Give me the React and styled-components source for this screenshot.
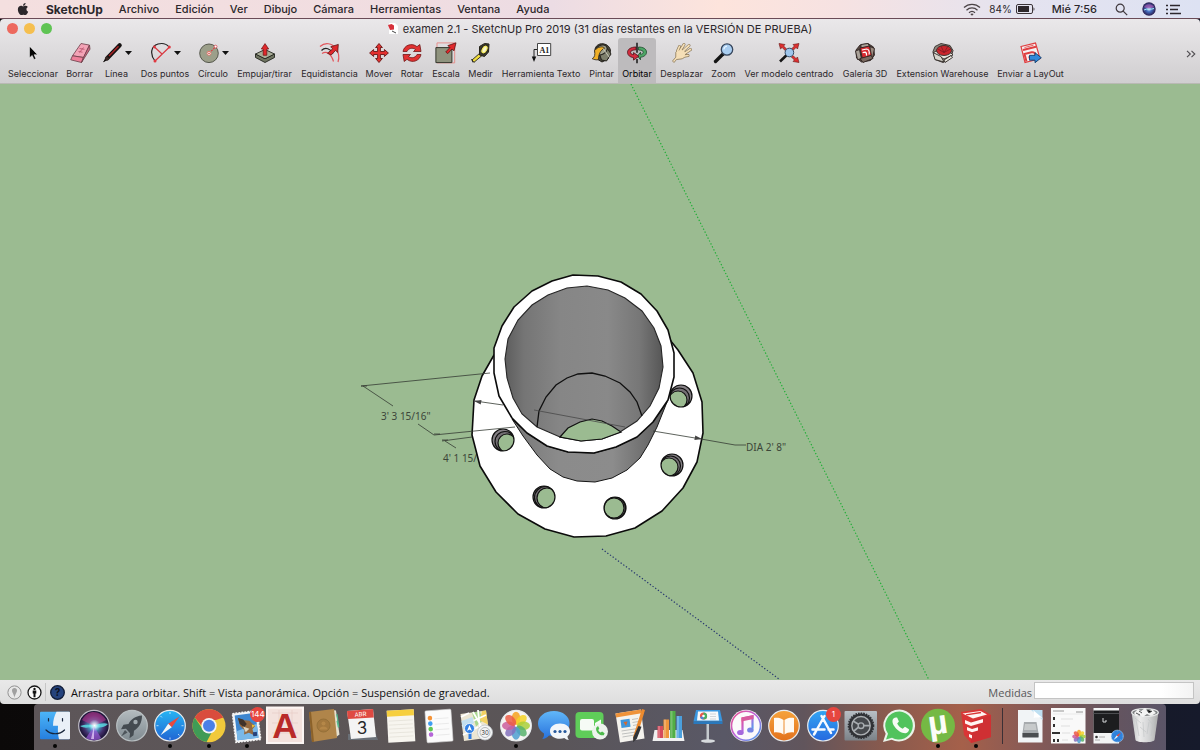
import React from 'react';
import styled, { createGlobalStyle } from 'styled-components';
import { FaApple, FaPhoneAlt } from 'react-icons/fa';

const theme = {
  fonts: {
    ui: 'Inter, "Liberation Sans", sans-serif',
    status: '"Open Sans", "Noto Sans", sans-serif',
    dimension: '"Noto Sans", "DejaVu Sans", sans-serif'
  },
  fontSizes: {
    label: '9px',
    status: '11px',
    menu: '11px',
    appMenu: '12px'
  },
  colors: {
    text: '#2b272b',
    ground: '#9bbb91',
    border: '#6a4b57'
  }
};

const GlobalStyle = createGlobalStyle`
  * {
    box-sizing: border-box;
  }

  body {
    margin: 0;
    background: #0d0b0d;
    font-family: ${theme.fonts.ui};
    color: ${theme.colors.text};
  }

  button {
    margin: 0;
    padding: 0;
    border: 0;
    background: none;
    font: inherit;
    color: inherit;
  }

  svg {
    display: block;
  }
`;

const Desktop = styled.div`
  display: flex;
  flex-direction: column;
  min-height: 100vh;
  background: linear-gradient(90deg, #0b0909, #171316 50%, #161a2b);
`;

const MenuBar = styled.header`
  display: flex;
  justify-content: space-between;
  align-items: center;
  height: 19px;
  padding: 0 19px 0 16px;
  border-bottom: 1px solid ${theme.colors.border};
  background: linear-gradient(90deg, #f4dfdf, #f0dde1 35%, #ecdce4 46%, #fde4dc 60%, #f6e2e2 70%, #e5e3ef 84%, #dde2f3);
  font-size: ${theme.fontSizes.menu};
  white-space: nowrap;
`;

const Menus = styled.nav`
  display: flex;
  align-items: center;
  gap: 16px;
`;

const MenuButton = styled.button`
  font-size: ${({ $bold }) => ($bold ? theme.fontSizes.appMenu : theme.fontSizes.menu)};
  font-weight: ${({ $bold }) => ($bold ? 700 : 500)};
`;

const MenuExtras = styled.div`
  display: flex;
  align-items: center;
`;

const ExtraButton = styled.button`
  margin-left: ${({ $space }) => $space}px;
  font-weight: 500;
`;

const Battery = styled.div`
  display: flex;
  align-items: center;
  gap: 4px;
  margin-left: 8px;
  font-size: 10px;
`;

const Window = styled.main`
  display: flex;
  flex: 1;
  flex-direction: column;
  overflow: hidden;
  border-radius: 4px;
`;

const WindowHead = styled.div`
  height: 65px;
  border-bottom: 1px solid #b9b9b4;
  background: linear-gradient(#eae8ea, #d0ced0);
`;

const TitleBar = styled.div`
  display: grid;
  grid-template-columns: 60px 1fr 60px;
  align-items: center;
  height: 19px;
  padding: 0 7px;
`;

const TrafficLights = styled.div`
  display: flex;
  gap: 6px;
`;

const TrafficLight = styled.button`
  width: 11px;
  height: 11px;
  border-radius: 50%;
  background: ${({ $color }) => $color};
`;

const Title = styled.h1`
  display: flex;
  justify-content: center;
  align-items: center;
  gap: 5px;
  margin: 0;
  font-size: ${theme.fontSizes.menu};
  font-weight: 400;
  white-space: nowrap;
`;

const Toolbar = styled.div`
  display: flex;
  height: 45px;
  padding: 0 4px;
`;

const Tool = styled.button`
  display: flex;
  flex: 0 0 ${({ $width }) => $width}px;
  flex-direction: column;
  align-items: center;
  gap: 4px;
  padding-top: 4px;
  border-radius: 3px 3px 0 0;
  background: ${({ $active }) => ($active ? '#bdbbbd' : 'none')};
  color: ${({ $active }) => ($active ? '#000' : 'inherit')};
  font-size: ${theme.fontSizes.label};
  line-height: 12px;
  white-space: nowrap;
`;

const ToolPicture = styled.span`
  display: flex;
  align-items: center;
  gap: 2px;
`;

const Overflow = styled.button`
  margin-left: auto;
  padding: 0 0 13px;
`;

const Viewport = styled.section`
  display: flex;
  flex: 1;
  min-height: 0;
  background: ${theme.colors.ground};

  svg {
    flex: 1;
    width: 100%;
  }
`;

const StatusBar = styled.footer`
  display: flex;
  align-items: center;
  height: 24px;
  padding: 0 6px 0 7px;
  background: linear-gradient(#e9e9e9, #dedede);
  font-family: ${theme.fonts.status};
  font-size: ${theme.fontSizes.status};
  white-space: nowrap;
`;

const StatusButton = styled.button`
  margin-right: ${({ $space }) => $space}px;
`;

const Divider = styled.span`
  width: 1px;
  height: 18px;
  margin-right: 4px;
  background: #c6c6c6;
`;

const StatusText = styled.p`
  margin: 0;
  color: #0f0f0f;
`;

const Measure = styled.label`
  display: flex;
  align-items: center;
  gap: 2px;
  margin-left: auto;
  color: #58585a;
`;

const MeasureInput = styled.input`
  width: 160px;
  height: 17px;
  margin-bottom: 4px;
  padding: 0 3px;
  border: 1px solid #c4c4c4;
  background: linear-gradient(90deg, #fff 80%, #f3f3f3);
  font: inherit;
`;

const DockArea = styled.div`
  padding: 0 34px;
`;

const Dock = styled.nav`
  display: flex;
  height: 46px;
  padding: 2px 2px 0;
  border-radius: 4px 4px 0 0;
  background: linear-gradient(90deg, #5d5659, #5b5556 35%, #5a5558 45%, #595866 61%, #61555c 68%, #885a4e 75%, #a5604a 82%, #875a56 88%, #65545e 95%, #5b5568);
`;

const DockItem = styled.button`
  position: relative;
  display: flex;
  flex: 1;
  flex-direction: column;
  align-items: center;

  svg {
    flex: 0 0 38px;
    overflow: visible;
  }
`;

const RunningDot = styled.span`
  width: 4px;
  height: 4px;
  border-radius: 50%;
  background: #050505;
`;

const Badge = styled.span`
  position: absolute;
  top: 1px;
  right: 1px;
  min-width: 15px;
  height: 15px;
  border-radius: 8px;
  background: #e6463f;
  color: #fff;
  font-size: 8px;
  line-height: 15px;
  text-align: center;
`;

const DockSeparator = styled.span`
  flex: 0 0 15px;
  height: 36px;
  margin-top: 2px;
  background: linear-gradient(#3b3036, #3b3036) center / 1px 100% no-repeat;
`;

const ToolIcon = ({ children }) => (
  <svg width="22" height="22" viewBox="0 0 22 22" aria-hidden="true">{children}</svg>
);

const FourArrows = 'M11 1.5l3.4 4h-2v4h4v-2l4 3.5-4 3.5v-2h-4v4h2l-3.4 4-3.4-4h2v-4h-4v2L1.6 11l4-3.5v2h4v-4h-2z';

const toolIcons = {
  select: <path d="M7.5 4.2v11.6l2.7-2.4 1.8 4.1 1.9-.8-1.8-4h3.5z" fill="#050505" stroke="#fff" strokeWidth=".5" />,
  eraser: (
    <g stroke="#6b3c48" strokeWidth=".8" strokeLinejoin="round">
      <path d="M12 1.500l8.500 1.600-6 12.400L3.500 13.800z" fill="#f3a3b6" />
      <path d="M3.500 13.800l11 1.700-2 5-10.800-2.700z" fill="#ee809a" />
      <path d="M14.500 15.500l6-12.400.5 4-8.500 13.400z" fill="#d06a84" />
      <path d="M10.500 10.500l4-5M10.500 6.500l5 .8M9.500 9.500l4 .7" stroke="#b64d68" fill="none" />
    </g>
  ),
  pencil: (
    <g>
      <path d="M6 16.500L18.700 3.300" stroke="#161212" strokeWidth="4.200" strokeLinecap="round" />
      <path d="M8 14L17.500 4.200" stroke="#a92324" strokeWidth="1.500" />
      <path d="M5.500 13.800l3 3-6.300 3.400z" fill="#3b2723" />
      <path d="M4.200 17l1.400 1.400L2 20.200z" fill="#111" />
    </g>
  ),
  arc: (
    <g fill="none">
      <path d="M5 19C-.5 12 1 4 8 2c5-1.3 9 .5 11 3" stroke="#202020" strokeWidth="1.200" />
      <path d="M5 19L19.500 5M4.500 5l7.500 7" stroke="#d93a42" strokeWidth="1.200" />
      <g fill="#e03840"><circle cx="5" cy="19" r="1.500" /><circle cx="19.300" cy="5" r="1.500" /><circle cx="4.500" cy="5" r="1.400" /></g>
    </g>
  ),
  circle: (
    <g>
      <circle cx="11" cy="11.300" r="9.300" fill="#9c9f8a" stroke="#4c4e43" strokeWidth=".9" />
      <path d="M11 11.300l6.500-6.500" stroke="#e03b40" strokeWidth="1.100" strokeDasharray="2 1" />
      <circle cx="11" cy="11.300" r="2" fill="#fff" stroke="#dd7768" />
      <circle cx="11" cy="11.300" r=".8" fill="#c22" />
      <circle cx="17.600" cy="4.600" r="1.400" fill="#fff" stroke="#dd3840" strokeWidth=".7" />
    </g>
  ),
  pushPull: (
    <g strokeLinejoin="round">
      <path d="M1.500 12v3.500L11 20.500l9.500-5V12L11 16.600z" fill="#6f7461" stroke="#23251e" strokeWidth=".9" />
      <path d="M1.500 12L11 7.500l9.500 4.500L11 16.800z" fill="#a9ad98" stroke="#23251e" strokeWidth=".9" />
      <path d="M9.200 13.300V7H7.300L11 1.600 14.700 7h-1.900v6.300z" fill="#df292c" stroke="#6b1212" strokeWidth=".7" />
    </g>
  ),
  offset: (
    <g fill="none" strokeWidth="1.200">
      <path d="M1 4.500c5-4.500 12-3.500 16 2 3 4.500 3.500 9 2 13.500" stroke="#e2565c" />
      <path d="M3 11.500c5-3 9.500 1 11.500 8" stroke="#e2565c" />
      <path d="M2.500 8.500c4-4 9-1.600 11.500 3" stroke="#222" />
      <path d="M8.500 11.200l5.200-4.400-2-2 7.600-2.400-.6 8-2.100-2-4.400 4.600z" fill="#df292c" stroke="#5e1515" strokeWidth=".8" />
    </g>
  ),
  move: <path d={FourArrows} fill="#e4302f" stroke="#681515" strokeWidth=".9" strokeLinejoin="round" />,
  rotate: (
    <g fill="#e23131" stroke="#711919" strokeWidth=".8" strokeLinejoin="round">
      <path d="M2 9.500C3 3.500 10.500.2 16 4.700l2.800-2.200L20 9.500h-7.500l2-2C11.500 5.200 7.500 6.300 6 9.500z" />
      <path d="M20 12.500C19 18.500 11.500 21.800 6 17.300l-2.800 2.200L2 12.500h7.500l-2 2c3 2.300 7 1.200 8.500-2z" />
    </g>
  ),
  scale: (
    <g>
      <path d="M2 .9h17.700v20H2z" fill="none" stroke="#e58f8c" />
      <path d="M.9 5.600h16v15h-16z" fill="#8f937e" stroke="#34372d" />
      <path d="M10.700 10l4.200-4.400-2-2L21 .8l-2 8-2-1.800-4.200 4.600z" fill="#e0292c" stroke="#621414" strokeWidth=".8" />
    </g>
  ),
  tape: (
    <g stroke="#25231a" strokeLinejoin="round">
      <path d="M2 18l8-7 2.400 2.200L4 20.300z" fill="#f0dc3c" strokeWidth=".9" />
      <path d="M9.500 4.500l5-3 4.500.5-.5 8-4 4.500-5-1.500z" fill="#3c3a31" />
      <ellipse cx="14.500" cy="7.500" rx="3.200" ry="4.700" transform="rotate(30 14.500 7.500)" fill="#f3e85b" />
      <ellipse cx="14.600" cy="7.400" rx="1.500" ry="3" transform="rotate(30 14.600 7.400)" fill="#f7f5cf" stroke="none" />
      <path d="M1.600 17l1.500 3.500" />
    </g>
  ),
  text: (
    <g>
      <path d="M7.500 1.500h13.200v12H7.500z" fill="#fff" stroke="#444" />
      <path d="M7 7.500H4V17" fill="none" stroke="#222" />
      <path d="M1.800 14.500h4.400L4 20z" fill="#111" />
      <text x="9.500" y="10.500" fontFamily="Liberation Serif, serif" fontSize="8" fontWeight="700" fill="#222">A1</text>
    </g>
  ),
  paint: (
    <g stroke="#25221d" strokeLinejoin="round">
      <path d="M4 8c0-4 4-6.700 8-6.200 4.400.5 7.500 3.600 7.500 7.700L17 17l-6 3-5-3z" fill="#48483b" />
      <path d="M8 10.500l8-4.500 4 6-4.500 7-5-1z" fill="#7e806c" />
      <ellipse cx="10" cy="8" rx="6.500" ry="4.600" transform="rotate(-28 10 8)" fill="#a2a48f" />
      <path d="M3.600 8.600c3.200-4 8-4.800 10-2.400-4.400 2.200-6 6.200-6.200 11.500-3.200.6-6.200-1-6.200-1 2.600-1.400 3-4 2.400-8.100z" fill="#efaf27" strokeWidth=".8" />
      <path d="M12 6.500l6.500 9" stroke="#c8c8b9" />
    </g>
  ),
  orbit: (
    <g strokeLinejoin="round">
      <path d="M12.500 5c4.500 0 8 1.800 8 5.100 0 3-2.500 4.700-6 5.200v2.500L11.500 14l3-3.800v2.200c1.800-.3 2.800-1 2.800-2.200 0-1.500-2-2.200-4.800-2.200z" fill="#4ea666" stroke="#1d4a2c" strokeWidth=".8" />
      <path d="M10 5C5 5 1.500 7.200 1.500 10.300c0 3 2.500 4.800 6 5.400v2.400l5.400-3.800-5.400-3.700v2.100c-2-.4-3-1.200-3-2.400C4.500 8.800 7 7.800 10 7.800z" fill="#d22c3e" stroke="#4d1119" strokeWidth=".8" />
      <path d="M11 .8v10M11 17v4.200" stroke="#171717" strokeWidth="1.500" />
    </g>
  ),
  pan: (
    <g strokeLinecap="round" strokeLinejoin="round">
      <path d="M6.500 9L8.500 4.500M9.500 8L13 2.500M12.500 8.500L18 3.500M13.500 11.500L19.500 7.500M8 15L17 13.500" stroke="#8a7757" strokeWidth="3" />
      <path d="M5 10c2-3 7-3.500 9-.5 1.500 3 0 7-4 7.500l-4.500.5L3 20.500 1.500 19l3-3.500z" fill="#f5dfb7" stroke="#8a7757" strokeWidth=".8" />
      <path d="M6.500 9L8.500 4.500M9.500 8L13 2.500M12.500 8.500L18 3.500M13.500 11.500L19.500 7.500M8 15L17 13.500" stroke="#f5dfb7" strokeWidth="1.700" />
    </g>
  ),
  zoom: (
    <g>
      <path d="M2.500 19.500L10 12" stroke="#151515" strokeWidth="3.400" strokeLinecap="round" />
      <circle cx="14" cy="7.500" r="5.700" fill="#a9cdf0" stroke="#38475d" strokeWidth="1.300" />
      <path d="M10.800 7.300c.3-2 1.600-3 3.200-3.200" stroke="#e7f5ff" fill="none" strokeWidth="1.200" />
    </g>
  ),
  extents: (
    <g>
      <path d="M1 1.500l6 1L5.600 4l3 3-1.500 1.500-3-3L2.500 7zM21 1.500l-6 1L16.400 4l-3 3L15 8.500l3-3L19.500 7zM21 20.500l-6-1 1.400-1.500-3-3 1.600-1.500 3 3 1.500-1.500z" fill="#df3030" stroke="#651616" strokeWidth=".6" />
      <path d="M2 19.500L8.500 13.300" stroke="#151515" strokeWidth="2.600" />
      <circle cx="11.400" cy="10.500" r="4.300" fill="#9fc6ec" stroke="#344a65" />
    </g>
  ),
  gallery: (
    <g stroke="#302523" strokeLinejoin="round" strokeWidth=".9">
      <path d="M2 8l4-5 8-1.500 5.500 3.500 1 8-4 5.500-9 1.500-5-4z" fill="#54443e" />
      <path d="M1.500 9l4-1.500 2 9.500-4 .5zM7 2.500l7-1 1.500 3L7 6z" fill="#aaa299" />
      <path d="M16 4.500l4.500 2-2 9.500-3.500-1.500z" fill="#9c8c81" />
      <path d="M6 6l9.500-2 2 9.500-9 3.500z" fill="#d8292e" />
      <path d="M8 8l4.500-1c2 0 3.300 2.200 2.600 5.500M8.600 10.700l2.600-.6c1 .3 1.500 1.500 1.300 3.500" fill="none" stroke="#fff" strokeWidth="1.200" />
      <path d="M6 16.500l11-3 2 3-10 4z" fill="#7b6a60" />
    </g>
  ),
  warehouse: (
    <g stroke="#332c29" strokeLinejoin="round" strokeWidth=".9">
      <path d="M3 4.500l6-3 9 2 3 5-2 7-8 5-8-3-2-8z" fill="#8f867d" />
      <path d="M1 11l3-2 15 2 2 2-9 4z" fill="#e3e1da" />
      <ellipse cx="12" cy="8.500" rx="7.500" ry="5" fill="#c9252c" />
      <path d="M6 7l6 3.500L18.500 7M9 4l3 6.500L16 4.200" fill="none" stroke="#761922" strokeWidth=".7" />
      <path d="M1 10.500l8 4 3 5.500-9-2.500z" fill="#d8d5cc" />
      <path d="M12 18l7-4.500 1.500 2-7.500 5z" fill="#e6e4dc" />
    </g>
  ),
  layout: (
    <g>
      <path d="M1 4.500l13-3.200 1.500-.3 4.500 15.500L5 20.500z" fill="#f5f1f2" stroke="#df3e40" strokeWidth="1.200" />
      <path d="M3 8l13-3.300M6.500 19.500L4.500 12l7-1.700c2.500-.4 3.700.5 4 3M8.500 15.500l3-.8" fill="none" stroke="#df3e40" strokeWidth="2" />
      <path d="M4.500 5.500l9-2.300" stroke="#df3e40" strokeWidth=".8" />
      <path d="M9.500 13.300h5.500v-2.600l6.300 5-6.300 5v-2.500H9.500z" fill="#3288d9" stroke="#123c6c" strokeWidth=".9" />
    </g>
  )
};

const tools = [
  { label: 'Seleccionar', icon: 'select', width: 58 },
  { label: 'Borrar', icon: 'eraser', width: 35 },
  { label: 'Línea', icon: 'pencil', width: 39, menu: true },
  { label: 'Dos puntos', icon: 'arc', width: 58, menu: true },
  { label: 'Círculo', icon: 'circle', width: 38, menu: true },
  { label: 'Empujar/tirar', icon: 'pushPull', width: 65 },
  { label: 'Equidistancia', icon: 'offset', width: 65 },
  { label: 'Mover', icon: 'move', width: 34 },
  { label: 'Rotar', icon: 'rotate', width: 32 },
  { label: 'Escala', icon: 'scale', width: 36 },
  { label: 'Medir', icon: 'tape', width: 33 },
  { label: 'Herramienta Texto', icon: 'text', width: 88 },
  { label: 'Pintar', icon: 'paint', width: 33 },
  { label: 'Orbitar', icon: 'orbit', width: 38, active: true },
  { label: 'Desplazar', icon: 'pan', width: 51 },
  { label: 'Zoom', icon: 'zoom', width: 33 },
  { label: 'Ver modelo centrado', icon: 'extents', width: 98 },
  { label: 'Galería 3D', icon: 'gallery', width: 54 },
  { label: 'Extension Warehouse', icon: 'warehouse', width: 101 },
  { label: 'Enviar a LayOut', icon: 'layout', width: 75 }
];

const menus = ['Archivo', 'Edición', 'Ver', 'Dibujo', 'Cámara', 'Herramientas', 'Ventana', 'Ayuda'];

const OUTER_RIM = '573,275 598,276 621,282 641,294 657,311 668,330 674,353 674,377 668,400 653,422 637,437 616,447 594,453 568,452 547,446 527,433 512,418 499,396 494,373 494,348 502,326 514,307 532,291 552,281';
const INNER_RIM = '587,286 608,290 625,298 642,311 654,328 661,346 663,367 659,388 650,406 637,421 620,432 602,439 581,441 560,437 537,427 522,414 513,398 507,378 505,359 508,339 518,320 532,305 548,295 567,288';
const BORE_EDGE = '537,427 539,411 546,397 556,385 567,378 578,374 592,373 605,376 620,383 630,392 637,402 642,416';
const BORE_HOLE = '560,437 568,428 580,422 592,419 602,421 612,426 621,432 602,439 581,441';
const TUBE = '512,419 527,433 547,446 568,452 594,453 616,447 637,437 653,422 667,402 657,427 648,445 640,458 627,470 612,478 595,482 577,481 563,477 550,469 537,455 523,436';
const FLANGE = '494,355 482,376 474,400 472,435 480,466 496,492 518,514 545,529 574,537 606,536 635,528 662,511 683,488 697,462 703,433 702,402 693,373 678,350 670,340';

const holes = [
  { x: 503, y: 440, gx: 507, gy: 443, r: 9 },
  { x: 544, y: 497, gx: 547, gy: 498, r: 10 },
  { x: 615, y: 508, gx: 614, gy: 508, r: 10 },
  { x: 672, y: 465, gx: 669, gy: 467, r: 9 },
  { x: 681, y: 396, gx: 678, gy: 400, r: 9 }
];

const Model = () => (
  <svg viewBox="0 84 1200 596" preserveAspectRatio="xMidYMid slice" role="img" aria-label="examen 2.1">
    <defs>
      <linearGradient id="bore">
        <stop offset="0" stopColor="#5d5d5d" />
        <stop offset=".12" stopColor="#757575" />
        <stop offset=".35" stopColor="#868686" />
        <stop offset=".65" stopColor="#898989" />
        <stop offset=".85" stopColor="#777" />
        <stop offset="1" stopColor="#565656" />
      </linearGradient>
      <linearGradient id="tube">
        <stop offset="0" stopColor="#777" />
        <stop offset=".3" stopColor="#8b8b8b" />
        <stop offset=".65" stopColor="#8c8c8c" />
        <stop offset="1" stopColor="#5b5b5b" />
      </linearGradient>
      {holes.map(({ x, y }, i) => (
        <clipPath id={`hole-${i}`} key={x}><circle cx={x} cy={y} r="11" /></clipPath>
      ))}
    </defs>
    <path d="M631 84L929 680" stroke="#1fae36" strokeWidth="1.200" strokeDasharray="1.300 2" />
    <path d="M602 549L779 679" stroke="#26356f" strokeWidth="1.200" strokeDasharray="1.300 2" />
    <g fontFamily={theme.fonts.dimension} fontSize="10" fill="#3c4639">
      <text x="381" y="420">3' 3 15/16"</text>
      <text x="443" y="462">4' 1 15/16"</text>
      <text x="746" y="451">DIA 2' 8"</text>
    </g>
    <polygon points={FLANGE} fill="#fff" stroke="#0b0b0b" strokeWidth="1.600" strokeLinejoin="round" />
    {holes.map(({ x, y, gx, gy, r }, i) => (
      <g key={x}>
        <circle cx={x} cy={y} r="11" fill="#858085" />
        <g clipPath={`url(#hole-${i})`} stroke="#111" strokeWidth="1.200">
          <circle cx={(x + gx) / 2} cy={(y + gy) / 2} r={r + 1} fill="#746f74" />
          <circle cx={gx} cy={gy} r={r} fill={theme.colors.ground} />
        </g>
        <circle cx={x} cy={y} r="11" fill="none" stroke="#111" strokeWidth="1.200" />
      </g>
    ))}
    <polygon points={TUBE} fill="url(#tube)" stroke="#161616" strokeLinejoin="round" />
    <polygon points={OUTER_RIM} fill="#fff" stroke="#0b0b0b" strokeWidth="1.600" strokeLinejoin="round" />
    <polygon points={INNER_RIM} fill="url(#bore)" stroke="#262626" strokeWidth="1.100" />
    <polygon points={BORE_HOLE} fill={theme.colors.ground} stroke="#101010" strokeWidth="1.200" />
    <polyline points={BORE_EDGE} fill="none" stroke="#101010" strokeWidth="1.300" />
    <g fill="none" stroke="#353b34" strokeWidth=".8">
      <path d="M361 386L490 373M363 386l30 20M418 424l16 11 81-8M442 441l30-4M445 441l11 7" />
      <path d="M361 386h6M434 434h6M442 440h6" />
      <path d="M475 401l28 4M653 431l48 8 34 6h11" />
      <path d="M534 410l91 17" stroke="#484848" />
    </g>
    <path d="M474 401l7.500-1-.8 4.400zM702 439l-7.600 1 .9-4.600z" fill="#444" />
  </svg>
);

const DockIcon = ({ children }) => (
  <svg width="38" height="38" viewBox="0 0 38 38" aria-hidden="true">{children}</svg>
);

const Gradient = ({ id, from, to }) => (
  <linearGradient id={id} x2="0" y2="1">
    <stop stopColor={from} />
    <stop offset="1" stopColor={to} />
  </linearGradient>
);

const Disc = ({ fill, stroke = '#e9edf0' }) => (
  <circle cx="19" cy="19.700" r="15.300" fill={fill} stroke={stroke} strokeWidth="1.200" />
);

const petals = ['#f6a21f', '#f5d327', '#a9cf3a', '#57b16c', '#4f9fd1', '#8371bd', '#cb5d9c', '#ec5a46'];

const Petals = ({ cx, cy, scale = 1 }) => (
  <g transform={`translate(${cx} ${cy}) scale(${scale})`}>
    {petals.map((color, i) => (
      <ellipse key={color} cy="-7.500" rx="4.200" ry="6.500" fill={color} fillOpacity=".85" transform={`rotate(${i * 45})`} />
    ))}
  </g>
);

const Compass = () => (
  <>
    <path d="M19 6v2M19 31.500v2M5.500 19.700h2M30.500 19.700h2M9.500 10l1.400 1.400M27 28l1.500 1.500" stroke="#d9effd" strokeWidth=".8" />
    <path d="M28.500 10.500l-7.700 10.800-3.600-3.600z" fill="#eb493d" />
    <path d="M9.500 29.300l11.300-8-3.600-3.600z" fill="#f4f6f7" />
  </>
);

const dockIcons = {
  finder: (
    <>
      <defs><Gradient id="finder" from="#4cb5f7" to="#267fdf" /></defs>
      <rect x="4" y="5.700" width="30" height="27.500" rx="1" fill="url(#finder)" />
      <path d="M20.500 5.700c-2 4-3.500 8.300-3.500 14h5c-.4 5 .1 9.500 1 13.500h10a1 1 0 001-1V6.700a1 1 0 00-1-1z" fill="#e9f0f7" />
      <path d="M12.500 12.500v2.500M26.500 12.500v2.500M10 24c5 5 13.500 5 18.500 0" fill="none" stroke="#17253a" strokeWidth="1.200" strokeLinecap="round" />
    </>
  ),
  siri: (
    <>
      <defs>
        <radialGradient id="siri"><stop stopColor="#d7fbff" /><stop offset=".25" stopColor="#4aa8cc" /><stop offset=".65" stopColor="#43306c" /><stop offset="1" stopColor="#120e2b" /></radialGradient>
        <radialGradient id="siriGlow"><stop stopColor="#fff" /><stop offset="1" stopColor="#bff6ff" stopOpacity="0" /></radialGradient>
      </defs>
      <Disc fill="url(#siri)" stroke="#c2bfc9" />
      <path d="M7 14C13 3 25 4 31 14l-12 6z" fill="#b5358b" opacity=".6" />
      <path d="M5 20c5-2 10-1 14-1 5 0 9-3 14-1-4 4-9 4-13 3-5 0-11 2-15-1z" fill="#59dbe2" opacity=".85" />
      <path d="M19 20l-8 12c5 3 11 3 15 0z" fill="#9a5ad8" opacity=".7" />
      <path d="M19 20l-3 13h3z" fill="#ecd6ff" opacity=".7" />
      <circle cx="19.500" cy="19.500" r="6" fill="url(#siriGlow)" />
    </>
  ),
  launchpad: (
    <>
      <defs><Gradient id="launchpad" from="#b3bbbf" to="#7f8a90" /></defs>
      <Disc fill="url(#launchpad)" stroke="#b9c0c3" />
      <path d="M29 9.500c-7 .5-11 4-13.500 8.500l-5 .7-2.500 4.500 5-.5 4 4.500-.5 5 4-3 .5-4.500C26 21.500 29 17 29 9.500z" fill="#444b51" />
      <circle cx="22.500" cy="16" r="2.200" fill="#a1aaaf" />
      <path d="M12 24l-4 6.500 6.500-4z" fill="#4d555b" />
    </>
  ),
  safari: (
    <>
      <defs><Gradient id="safari" from="#27b5f3" to="#2164d3" /></defs>
      <Disc fill="url(#safari)" />
      <Compass />
    </>
  ),
  chrome: (
    <>
      <circle cx="19" cy="19.700" r="16.500" fill="#f1c93b" />
      <path d="M4.700 11.500A16.500 16.500 0 0133.300 11.500L26 14H19c-4 0-7 3-7 6z" fill="#d94c3d" />
      <path d="M4.700 11.500L12.500 23c1.500 3 5 4.500 9 3.700l-5 9.300A16.500 16.500 0 014.700 11.500z" fill="#3f9b56" />
      <circle cx="19" cy="19.700" r="7.700" fill="#f2f3f4" />
      <circle cx="19" cy="19.700" r="6" fill="#4a80e8" />
    </>
  ),
  mail: (
    <g transform="rotate(-7 19 20)">
      <path d="M6 6h25v29H6z" fill="#f2f4f6" stroke="#f4f4f4" strokeWidth="1.500" strokeDasharray="2 1" />
      <path d="M8 8h21v25H8z" fill="#3e86cf" />
      <path d="M8 24l21-5v14H8z" fill="#79b8e8" />
      <path d="M11 11l6 3 5 1 5 6-3 3 1 6-5-3-5 1 1-4-4-5z" fill="#94693f" />
      <path d="M11 11l5 2 3 5-3 3-4-4z" fill="#3f3229" />
      <path d="M24 19l3 1.500-3 2z" fill="#f0c23b" />
      <path d="M15 20l6 3-4 3z" fill="#ddd3bc" />
      <path d="M24 27h4v4h-4z" fill="#27427b" />
    </g>
  ),
  autocad: (
    <>
      <rect x="0" y=".7" width="38" height="37.300" fill="#f3e2dd" />
      <rect x="1" y="1.700" width="36" height="35.300" fill="none" stroke="#fbf5f3" strokeWidth="2" />
      <path d="M6 7h26M6 17h26M6 27h26M13 4v30M26 4v30" stroke="#e5cbc5" strokeWidth=".6" />
      <text x="19" y="32" textAnchor="middle" fontFamily="Liberation Sans, sans-serif" fontSize="35" fontWeight="700" fill="#b92a29">A</text>
    </>
  ),
  contacts: (
    <>
      <path d="M27 4l4 .4 3.500 24-4 3z" fill="#e6e0cf" />
      <path d="M31 8l1.500.2 1 7-1 .2zM31.500 15l2 .2.800 6-1.500.2z" fill="#55b98c" />
      <path d="M4 6L29 3l3 29-25 4z" fill="#b0854a" />
      <path d="M4 6l2-.3 3 30-2 .3z" fill="#8b6129" />
      <circle cx="18.500" cy="19.500" r="6.500" fill="#a3783e" stroke="#957038" />
      <circle cx="18.500" cy="17.500" r="2" fill="#b58748" />
      <path d="M14.500 23.500c0-4 8-4 8 0z" fill="#b58748" />
    </>
  ),
  calendar: (
    <>
      <path d="M5 28h28l2 6H5z" fill="#6a7077" />
      <path d="M4 5l26-2 3 28-25 2z" fill="#f4f4f4" />
      <path d="M4 5l26-2 .8 8.500-26 1.500z" fill="#df4a42" />
      <text x="17.500" y="10.500" textAnchor="middle" fontFamily={theme.fonts.ui} fontSize="6" fill="#fff" transform="rotate(-4 17.500 8)">ABR</text>
      <text x="19" y="28" textAnchor="middle" fontFamily={theme.fonts.ui} fontSize="17" fill="#282828">3</text>
    </>
  ),
  notes: (
    <g transform="rotate(-3 19 20)">
      <path d="M5.500 4h27v32h-27z" fill="#f7f5ef" />
      <path d="M5.500 4h27v6h-27z" fill="#f6cf3f" />
      <path d="M7 14.500h24M7 18.500h24M7 22.500h24M7 26.500h24M7 30.500h24" stroke="#dedbd2" strokeWidth=".6" />
    </g>
  ),
  reminders: (
    <g transform="rotate(-4 19 20)">
      <rect x="6" y="4" width="26" height="32" rx="1" fill="#fbfbfb" stroke="#d5d5d5" strokeWidth=".6" />
      <circle cx="10.500" cy="11.500" r="2.300" fill="#f49337" />
      <circle cx="10.500" cy="17" r="2.300" fill="#3d9df2" />
      <circle cx="10.500" cy="22.500" r="2.300" fill="#61c654" />
      <circle cx="10.500" cy="28" r="2.300" fill="#b566d7" />
      <path d="M15 12.500h14M15 18h14M15 23.500h14M15 29h14" stroke="#e3e3e3" strokeWidth=".7" />
    </g>
  ),
  maps: (
    <>
      <path d="M2.500 8L28 4.500l3.500 27L6 35z" fill="#ece6d3" />
      <path d="M14 6.500l8-1 3 9-7 6z" fill="#a9d68f" />
      <path d="M24 5l4-.5 2 14-8-4z" fill="#f4d263" />
      <path d="M3 11l8-4M4 20L28 9M15 6l10 17M5 29l15-8M20 4l3 29" stroke="#fff" strokeWidth="1.800" />
      <path d="M3.500 15l11-4 1.500 6-11 6z" fill="#c3dff0" />
      <path d="M12 33v-9" stroke="#2e7ce2" strokeWidth="3" />
      <circle cx="11.500" cy="22.500" r="5" fill="#3482e5" stroke="#fff" strokeWidth=".8" />
      <path d="M11.500 19l2.500 6-2.500-1.500L9 25z" fill="#fff" />
      <circle cx="27" cy="26.500" r="7.500" fill="#f5f7f8" stroke="#bfc4c8" strokeWidth=".8" />
      <circle cx="27" cy="26.500" r="5" fill="none" stroke="#8b9094" strokeWidth=".6" />
      <text x="27" y="28.700" textAnchor="middle" fontFamily={theme.fonts.ui} fontSize="6" fill="#333">30</text>
    </>
  ),
  photos: (
    <>
      <Disc fill="#f6f4f1" />
      <Petals cx="19" cy="19.700" />
    </>
  ),
  messages: (
    <>
      <defs><Gradient id="messages" from="#61b7f9" to="#2872dc" /></defs>
      <path d="M19 5C9.500 5 3 10.500 3 17.500c0 4.200 2.300 7.800 6 10 .3 3-.8 4.500-2 5.500 3 0 5-1.300 7-3.500 12 2 20.500-4 20.500-12C34.500 10.500 28 5 19 5z" fill="url(#messages)" />
      <path d="M25 17.500c-6 0-10 3.200-10 7.700 0 4.400 4 7.600 10 7.600 1.700 0 3-.2 4.300-.7 1.300 1.200 3 1.900 4.700 1.900-1-1-1.500-2.300-1.500-3.700 1.600-1.300 2.500-3 2.500-5 0-4.600-4-7.800-10-7.800z" fill="#f3f6fa" />
      <g fill="#27599d"><circle cx="20" cy="25.500" r="1.600" /><circle cx="25" cy="25.500" r="1.600" /><circle cx="30" cy="25.500" r="1.600" /></g>
    </>
  ),
  facetime: (
    <>
      <rect x="2.500" y="6" width="28" height="26" rx="4" fill="#5fcd59" />
      <rect x="7" y="13" width="14" height="11.500" rx="2" fill="#f6fbf5" />
      <path d="M22 17l6-3.500v10.500l-6-3.500z" fill="#f6fbf5" />
      <circle cx="27" cy="25.500" r="8" fill="#eef4ee" />
      <path d="M23.200 21.800c-1 4 3.500 8.500 7.600 7.400l.8-2-2.500-1.600-1.500.8c-1.200-.6-2-1.500-2.300-2.500l1-1.300-1.300-2.500z" fill="#4dbb4c" />
    </>
  ),
  pages: (
    <>
      <path d="M3.500 7.500L29 3.500l3.500 29L8 36.500z" fill="#f5f3ee" />
      <path d="M3.500 7.500L29 3.500l.5 3.800L4 11.500z" fill="#ef933a" />
      <path d="M8.500 14l9-1.300 1 8-9 1.300z" fill="#3f97dc" />
      <path d="M11.500 16l4-.5-1.500 4.500z" fill="#d76a2e" />
      <path d="M20 13.500l6-1M20.500 16.500l6-1M21 19.500l5-1M9.500 25l15-2.300M10 28l14-2M10.500 31l12-2" stroke="#b3b4b2" strokeWidth=".8" />
      <path d="M30 3l3 1-8.500 28-3 3-.3-4.500z" fill="#ed8b2f" />
      <path d="M26.500 20l3 .8-4.700 12-3.600 3.500v-4.800z" fill="#303439" />
    </>
  ),
  numbers: (
    <>
      <path d="M4.500 24h28l2 11h-32z" fill="#f1f1f1" />
      <rect x="7.500" y="20" width="5.500" height="12" fill="#d54a5b" />
      <rect x="13.500" y="13.500" width="5.500" height="18.500" fill="#ef953b" />
      <rect x="20" y="5" width="5.500" height="27" fill="#51ae45" />
      <rect x="26.500" y="10" width="5.500" height="22" fill="#4a9fdd" />
      <path d="M8 20h2v12H8zM14 13.500h2V32h-2zM20.500 5h2v27h-2zM27 10h2v22h-2z" fill="#fff" opacity=".22" />
    </>
  ),
  keynote: (
    <>
      <rect x="17.500" y="17" width="2.500" height="17" fill="#c4c9cd" />
      <ellipse cx="19" cy="35" rx="7" ry="1.800" fill="#d7dbde" />
      <path d="M7 4h24l2.500 11.500h-29z" fill="#3a97e0" />
      <path d="M4.500 15.500h29v2.500h-29z" fill="#2979bd" />
      <path d="M9 5.500h20l1 9H8z" fill="#f7f9fa" />
      <circle cx="14.500" cy="10" r="3.600" fill="#e9574c" />
      <path d="M14.500 10V6.400a3.600 3.600 0 010 7.200z" fill="#45b263" />
      <path d="M14.500 10l-3.500 1a3.600 3.600 0 003.500 2.600z" fill="#4889dc" />
      <circle cx="14.500" cy="10" r="1.300" fill="#fff" />
      <path d="M21 8h6M21 10.500h6M21 13h6" stroke="#c7ccd1" strokeWidth=".8" />
    </>
  ),
  itunes: (
    <>
      <defs>
        <linearGradient id="itunes" x2="1" y2="1"><stop stopColor="#ef4f89" /><stop offset=".5" stopColor="#b764dd" /><stop offset="1" stopColor="#43a8ee" /></linearGradient>
      </defs>
      <circle cx="19" cy="19.700" r="15.900" fill="#f3f0f5" />
      <circle cx="19" cy="19.700" r="14.500" fill="#fbf9fb" stroke="url(#itunes)" strokeWidth="1.600" />
      <path d="M15.500 25.500V12.500l10-2.200v12.500" fill="none" stroke="url(#itunes)" strokeWidth="2.200" />
      <path d="M14.500 11.500l12-2.500v4l-12 2.500z" fill="#d85b9e" />
      <ellipse cx="13.400" cy="26.500" rx="3.300" ry="2.600" fill="#a568dc" />
      <ellipse cx="23.400" cy="24" rx="3.300" ry="2.600" fill="#7684e3" />
    </>
  ),
  books: (
    <>
      <defs><Gradient id="books" from="#f6a33b" to="#e2711d" /></defs>
      <Disc fill="url(#books)" />
      <path d="M18.500 14c-3-2.300-6.500-2.500-9.500-2v14.500c3.500-.5 7 0 9.500 2zM19.500 14c3-2.300 6.500-2.500 9.500-2v14.500c-3.500-.5-7 0-9.500 2z" fill="#fffaf3" />
    </>
  ),
  appStore: (
    <>
      <defs><Gradient id="appStore" from="#33a5f2" to="#2569df" /></defs>
      <Disc fill="url(#appStore)" />
      <path d="M20.500 10l-9 16M17.500 10l9.500 17M8.500 23.500h12M24.500 23.500h5M11.500 26l-1.500 2.500" stroke="#f7fbff" strokeWidth="2.500" strokeLinecap="round" />
    </>
  ),
  settings: (
    <>
      <defs><Gradient id="settings" from="#b8bfc5" to="#7b8288" /></defs>
      <rect x="2.500" y="5" width="32.500" height="29.500" rx="1" fill="url(#settings)" />
      <circle cx="19" cy="19.700" r="12.300" fill="#303236" stroke="#303236" strokeWidth="2" strokeDasharray="1.600 1" />
      <circle cx="19" cy="19.700" r="9.200" fill="#45484c" stroke="#adb1b4" strokeWidth="1.400" />
      <circle cx="19" cy="19.700" r="2.800" fill="none" stroke="#a7acb0" strokeWidth="1.400" />
      <path d="M16.500 18.300L11 15M16.500 21.200L12 25M21.500 19.700h6.500" stroke="#a7acb0" strokeWidth="1.700" />
    </>
  ),
  whatsapp: (
    <>
      <path d="M19.500 3.500A16 16 0 005.700 27.700L3 36l8.700-2.300A16 16 0 1019.500 3.500z" fill="#eaf3e9" />
      <path d="M19.500 5.500A14 14 0 008 27.700L6 33.500l6-1.800A14 14 0 1019.500 5.500z" fill="#51c35d" />
      <path d="M13.500 12.500c-4 4 4.500 15 12 14.700 2.300-.4 3.500-2 3.500-4l-4-2.400-2.300 2c-2.700-1-4.500-3-5.500-5.200l1.700-2-1.800-4c-1.200-.4-2.500-.2-3.600.9z" fill="#f7fbf6" />
    </>
  ),
  utorrent: (
    <>
      <circle cx="19" cy="19.700" r="17" fill="#75b944" />
      <text x="19" y="28" textAnchor="middle" fontFamily="Liberation Sans, sans-serif" fontSize="34" fontWeight="700" fill="#fbfdf8" transform="rotate(-8 19 20)">µ</text>
    </>
  ),
  sketchup: (
    <>
      <path d="M4 6l20-3 10 6v22l-20 6-7-8z" fill="#d93636" />
      <path d="M15 15l19-6v22l-20 6z" fill="#cf3033" />
      <path d="M5.500 7.500l18-2.500 6.500 3.500-14 4zM8 14l6 2.500 12-3.500v3.500l-12 3.500-6-2.500zM10 21l5 2 6-1.700v3.200l-6 1.800-5-2zM12 28l3 1.200v3.300l-3-1.500z" fill="#fff5f2" />
      <path d="M9 8.800l15-2.300" stroke="#d93636" strokeWidth="1.300" />
    </>
  ),
  document: (
    <>
      <path d="M7 4h16.500l8 8v24.500H7z" fill="#f1f4f6" />
      <path d="M20 4h11.500v10z" fill="#bfe0f2" />
      <path d="M22 4c1.500 3 1.500 6 .5 8 3-.6 6-.4 9 0z" fill="#fff" />
      <path d="M13 16h12.500l2 11v4h-16v-4z" fill="#a7abae" />
      <path d="M11.500 27h16v4.500h-16z" fill="#4a4d50" />
      <path d="M14 18h10.500l1 6h-12.500z" fill="#c7cacb" />
    </>
  ),
  photosWindow: (
    <>
      <rect x="2" y="2" width="34.500" height="35.500" fill="#f9f9f9" />
      <path d="M4 5h11M27 6h7" stroke="#7d7d7d" strokeWidth=".8" />
      <path d="M4 8h30" stroke="#ddd" strokeWidth=".6" />
      <path d="M4 11h2v3H4zM4 18h2v3H4zM3 26h8v2H3zM4 33h2v3H4zM8 33h2v3H8z" fill="#303030" />
      <path d="M12 13h12M12 20h9M13 27h8M13 34h6" stroke="#cfcfcf" strokeWidth=".6" />
      <Petals cx="30" cy="30.500" scale=".48" />
    </>
  ),
  safariWindow: (
    <>
      <rect x="6.500" y="2" width="25.500" height="35.500" fill="#f3f4f5" />
      <rect x="6.500" y="4.500" width="25.500" height="22.500" fill="#1c1d1f" />
      <path d="M6.500 7.500h25.500" stroke="#4c4e51" />
      <path d="M16 12v4h3v-2" fill="none" stroke="#d6d9da" />
      <path d="M12 31h6M8 34h5" stroke="#999" strokeWidth=".8" />
      <circle cx="9.500" cy="31" r="1.300" fill="#333" />
      <g transform="translate(22.700 22.300) scale(.4)"><Disc fill="#2e82dd" stroke="#c5dff6" /><Compass /></g>
    </>
  ),
  trash: (
    <>
      <defs>
        <linearGradient id="trash"><stop stopColor="#c2c4c5" /><stop offset=".3" stopColor="#ebebeb" /><stop offset=".65" stopColor="#d3d4d5" /><stop offset="1" stopColor="#aaa" /></linearGradient>
      </defs>
      <path d="M5.500 6h27L28.500 34c-1 3-18 3-19 0z" fill="url(#trash)" />
      <ellipse cx="19" cy="6.500" rx="13.300" ry="4" fill="#7e8082" stroke="#e4e5e6" strokeWidth="1.200" />
      <path d="M8 7l4-4 3 2 4-3 3 3 4-2 4 4-5 3-4-2-4 3-4-2-3 1z" fill="#f3f3f3" />
      <path d="M13 5l3 2M21 4l2 3 3-2M10 7l4 2" stroke="#4e5052" />
      <path d="M10 14l3 16M28 14l-3 16M17 16l1 15M23 16l-2 12M9 12l6 5M22 13l6 7M14 21l6 5" stroke="#c0c3c5" strokeWidth=".6" />
    </>
  )
};

const apps = [
  { name: 'Finder', icon: 'finder', running: true },
  { name: 'Siri', icon: 'siri' },
  { name: 'Launchpad', icon: 'launchpad' },
  { name: 'Safari', icon: 'safari', running: true },
  { name: 'Chrome', icon: 'chrome', running: true },
  { name: 'Mail', icon: 'mail', running: true, badge: 144 },
  { name: 'AutoCAD', icon: 'autocad' },
  { name: 'Contactos', icon: 'contacts' },
  { name: 'Calendario', icon: 'calendar' },
  { name: 'Notas', icon: 'notes' },
  { name: 'Recordatorios', icon: 'reminders' },
  { name: 'Mapas', icon: 'maps' },
  { name: 'Fotos', icon: 'photos', running: true },
  { name: 'Mensajes', icon: 'messages' },
  { name: 'FaceTime', icon: 'facetime' },
  { name: 'Pages', icon: 'pages' },
  { name: 'Numbers', icon: 'numbers' },
  { name: 'Keynote', icon: 'keynote' },
  { name: 'iTunes', icon: 'itunes' },
  { name: 'Libros', icon: 'books' },
  { name: 'App Store', icon: 'appStore', badge: 1 },
  { name: 'Preferencias', icon: 'settings' },
  { name: 'WhatsApp', icon: 'whatsapp' },
  { name: 'uTorrent', icon: 'utorrent', running: true },
  { name: 'SketchUp', icon: 'sketchup', running: true }
];

const places = [
  { name: 'Documento', icon: 'document' },
  { name: 'Ventana de Fotos', icon: 'photosWindow' },
  { name: 'Ventana de Safari', icon: 'safariWindow' },
  { name: 'Papelera', icon: 'trash' }
];

const DockEntry = ({ name, icon, running, badge }) => (
  <DockItem type="button" aria-label={name}>
    <DockIcon>{dockIcons[icon]}</DockIcon>
    {running && <RunningDot />}
    {badge && <Badge>{badge}</Badge>}
  </DockItem>
);

const App = () => {
  return (
    <Desktop>
      <GlobalStyle />
      <MenuBar>
        <Menus>
          <MenuButton type="button" aria-label="Apple"><FaApple size={14} /></MenuButton>
          <MenuButton type="button" $bold>SketchUp</MenuButton>
          {menus.map(name => <MenuButton type="button" key={name}>{name}</MenuButton>)}
        </Menus>
        <MenuExtras>
          <ExtraButton type="button" aria-label="Wi-Fi" $space={0}>
            <svg width="18" height="13" viewBox="0 0 18 13" fill="none" stroke="#4b4346" strokeWidth="1.300">
              <path d="M1 4.500c4.500-4.300 11.500-4.300 16 0M3.500 7.200c3.200-3 7.800-3 11 0M6 9.700c1.800-1.600 4.200-1.600 6 0" />
              <path d="M9 12.800L7.300 11c1-.8 2.400-.8 3.400 0z" fill="#4b4346" stroke="none" />
            </svg>
          </ExtraButton>
          <Battery>
            84%
            <svg width="20" height="10" viewBox="0 0 20 10">
              <rect x=".5" y=".5" width="16" height="9" rx="1.500" fill="none" stroke="#3b3438" />
              <rect x="2" y="2" width="11" height="6" fill="#2d272b" />
              <path d="M17.500 3.200c1.300.5 1.300 3.100 0 3.600z" fill="#3b3438" />
            </svg>
          </Battery>
          <ExtraButton type="button" $space={16}>Mié 7:56</ExtraButton>
          <ExtraButton type="button" aria-label="Buscar" $space={18}>
            <svg width="13" height="13" viewBox="0 0 13 13" fill="none" stroke="#3f383d" strokeWidth="1.200">
              <circle cx="5.200" cy="5.200" r="4" />
              <path d="M8.200 8.200l4 4" />
            </svg>
          </ExtraButton>
          <ExtraButton type="button" aria-label="Siri" $space={14}>
            <svg width="14" height="14" viewBox="0 0 14 14">
              <defs>
                <radialGradient id="menuSiri"><stop stopColor="#dff6ff" /><stop offset=".4" stopColor="#4671c5" /><stop offset="1" stopColor="#2a1c4e" /></radialGradient>
              </defs>
              <circle cx="7" cy="7" r="6.700" fill="url(#menuSiri)" />
              <path d="M2 5c3-4 8-3 10 0L7 7z" fill="#b851aa" opacity=".6" />
              <path d="M2 8c3-2 7 0 10-1.500" stroke="#a8ecf5" fill="none" />
            </svg>
          </ExtraButton>
          <ExtraButton type="button" aria-label="Notificaciones" $space={10}>
            <svg width="15" height="11" viewBox="0 0 15 11" stroke="#2c272d" strokeWidth="1.300">
              <path d="M0 1.500h2M4 1.500h10M0 5.500h2M4 5.500h8M0 9.500h2M4 9.500h11" />
            </svg>
          </ExtraButton>
        </MenuExtras>
      </MenuBar>
      <Window>
        <WindowHead>
          <TitleBar>
            <TrafficLights>
              <TrafficLight type="button" aria-label="Cerrar" $color="#ed695e" />
              <TrafficLight type="button" aria-label="Minimizar" $color="#f5bf4f" />
              <TrafficLight type="button" aria-label="Ampliar" $color="#5fc454" />
            </TrafficLights>
            <Title>
              <svg width="10" height="11" viewBox="0 0 10 11">
                <path d="M1 0h6l3 3v8H1z" fill="#fff" />
                <path d="M0 2l3.500-1L6 2.500v4L2 7z" fill="#d6303a" />
                <path d="M4 8l4 2" stroke="#444" />
              </svg>
              examen 2.1 - SketchUp Pro 2019 (31 días restantes en la VERSIÓN DE PRUEBA)
            </Title>
          </TitleBar>
          <Toolbar>
            {tools.map(({ label, icon, width, menu, active }) => (
              <Tool type="button" key={label} $width={width} $active={active}>
                <ToolPicture>
                  <ToolIcon>{toolIcons[icon]}</ToolIcon>
                  {menu && <svg width="7" height="4" viewBox="0 0 7 4"><path d="M0 0h7L3.500 4z" fill="#111" /></svg>}
                </ToolPicture>
                {label}
              </Tool>
            ))}
            <Overflow type="button" aria-label="Más herramientas">
              <svg width="10" height="8" viewBox="0 0 10 8" fill="none" stroke="#4f4c50" strokeWidth="1.100">
                <path d="M1 .8L4.300 4 1 7.200M5.500.8L8.800 4 5.500 7.200" />
              </svg>
            </Overflow>
          </Toolbar>
        </WindowHead>
        <Viewport><Model /></Viewport>
        <StatusBar>
          <StatusButton type="button" aria-label="Ubicación" $space={5}>
            <svg width="15" height="15" viewBox="0 0 15 15">
              <circle cx="7.500" cy="7.500" r="6.600" fill="#e8e8e8" stroke="#929292" />
              <path d="M7.500 13C7 9 5 8 5 5.600a2.500 2.500 0 015 0C10 8 8 9 7.500 13z" fill="#a0a0a0" />
            </svg>
          </StatusButton>
          <StatusButton type="button" aria-label="Créditos" $space={3}>
            <svg width="15" height="15" viewBox="0 0 15 15">
              <circle cx="7.500" cy="7.500" r="6.500" fill="#fafafa" stroke="#161616" strokeWidth="1.300" />
              <circle cx="7.500" cy="3.900" r="1.200" fill="#111" />
              <path d="M5.700 5.500h3.600v3h-.8v3.700h-2V8.500h-.8z" fill="#111" />
            </svg>
          </StatusButton>
          <Divider />
          <StatusButton type="button" aria-label="Ayuda" $space={6}>
            <svg width="15" height="15" viewBox="0 0 15 15">
              <circle cx="7.500" cy="7.500" r="6.800" fill="#25437d" stroke="#101c37" strokeWidth="1.300" />
              <text x="7.500" y="11.300" textAnchor="middle" fontFamily={theme.fonts.ui} fontSize="10" fontWeight="700" fill="#0a1020">?</text>
            </svg>
          </StatusButton>
          <StatusText>Arrastra para orbitar. Shift = Vista panorámica. Opción = Suspensión de gravedad.</StatusText>
          <Measure htmlFor="measure">
            Medidas
            <MeasureInput id="measure" type="text" />
          </Measure>
        </StatusBar>
      </Window>
      <DockArea>
        <Dock aria-label="Dock">
          {apps.map(app => <DockEntry key={app.name} {...app} />)}
          <DockSeparator />
          {places.map(place => <DockEntry key={place.name} {...place} />)}
        </Dock>
      </DockArea>
    </Desktop>
  );
};

export default App;
